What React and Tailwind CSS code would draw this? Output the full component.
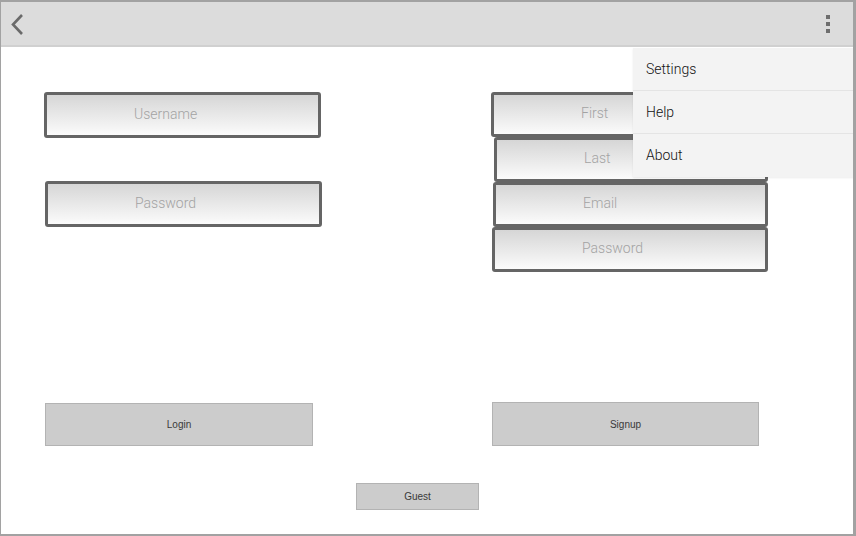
const FONT = { fontFamily: 'Roboto, "Liberation Sans", sans-serif' }

function Field({ label, size = 'w-[277px] h-[46px]', className = '' }) {
  return (
    <input
      placeholder={label}
      className={`block ${size} border-[3px] border-[#656565] rounded-[3px] bg-linear-to-b from-[#d6d6d6] to-[#fbfbfb] pl-[87px] pb-[3px] text-[14px] font-light text-[#555] placeholder:text-[#a3a3a3] outline-none ${className}`}
    />
  )
}

function Btn({ label, className = '' }) {
  return (
    <button
      className={`block bg-[#cccccc] border border-[#b3b3b3] text-[10px] text-[#3a3a3a] ${className}`}
      style={{ fontFamily: '"Liberation Sans", Arial, sans-serif' }}
    >
      {label}
    </button>
  )
}

export default function App() {
  return (
    <div
      className="relative w-[856px] h-[536px] bg-white border-l border-t-2 border-b-2 border-r-[3px] border-[#a2a2a2] flex flex-col overflow-hidden"
      style={FONT}
    >
      {/* Action bar */}
      <div className="h-[45px] shrink-0 bg-[#dcdcdc] border-b-2 border-[#d0d0d0] flex items-center justify-between pl-[9px] pr-[23px]">
        <svg width="16" height="24" viewBox="0 0 16 24">
          <polyline points="12,3 3,12.5 12,22" fill="none" stroke="#6a6a6a" strokeWidth="2.6" />
        </svg>
        <div className="flex flex-col gap-[3px]">
          <span className="w-[4px] h-[4px] bg-[#6e6e6e]" />
          <span className="w-[4px] h-[4px] bg-[#6e6e6e]" />
          <span className="w-[4px] h-[4px] bg-[#6e6e6e]" />
        </div>
      </div>

      {/* Forms */}
      <div className="flex-1 flex pl-[43px] pt-[45px]">
        <div className="w-[447px]">
          <Field label="Username" />
          <Field label="Password" className="mt-[43px] ml-[1px]" />
          <Btn label="Login" className="mt-[176px] ml-[1px] w-[268px] h-[43px]" />
        </div>
        <div>
          <Field label="First" size="w-[277px] h-[45px]" />
          <Field label="Last" size="w-[274px] h-[45px]" className="ml-[3px]" />
          <Field label="Email" size="w-[275px] h-[45px]" className="ml-[2px]" />
          <Field label="Password" size="w-[276px] h-[45px]" className="ml-[1px]" />
          <Btn label="Signup" className="mt-[130px] ml-[1px] w-[267px] h-[44px]" />
        </div>
      </div>
      <div className="pl-[355px] pb-[24px]">
        <Btn label="Guest" className="w-[123px] h-[27px]" />
      </div>

      {/* Overflow menu */}
      <div className="absolute left-[632px] top-[46px] w-[221px] bg-[#f3f3f3] text-[14px] font-light text-[#111] shadow-[0_1px_2px_rgba(0,0,0,0.08)]">
        {['Settings', 'Help', 'About'].map((item, i) => (
          <div
            key={item}
            className={`h-[43px] flex items-center pl-[13px] ${i < 2 ? 'border-b border-[#e4e4e4]' : ''}`}
          >
            {item}
          </div>
        ))}
      </div>
    </div>
  )
}
